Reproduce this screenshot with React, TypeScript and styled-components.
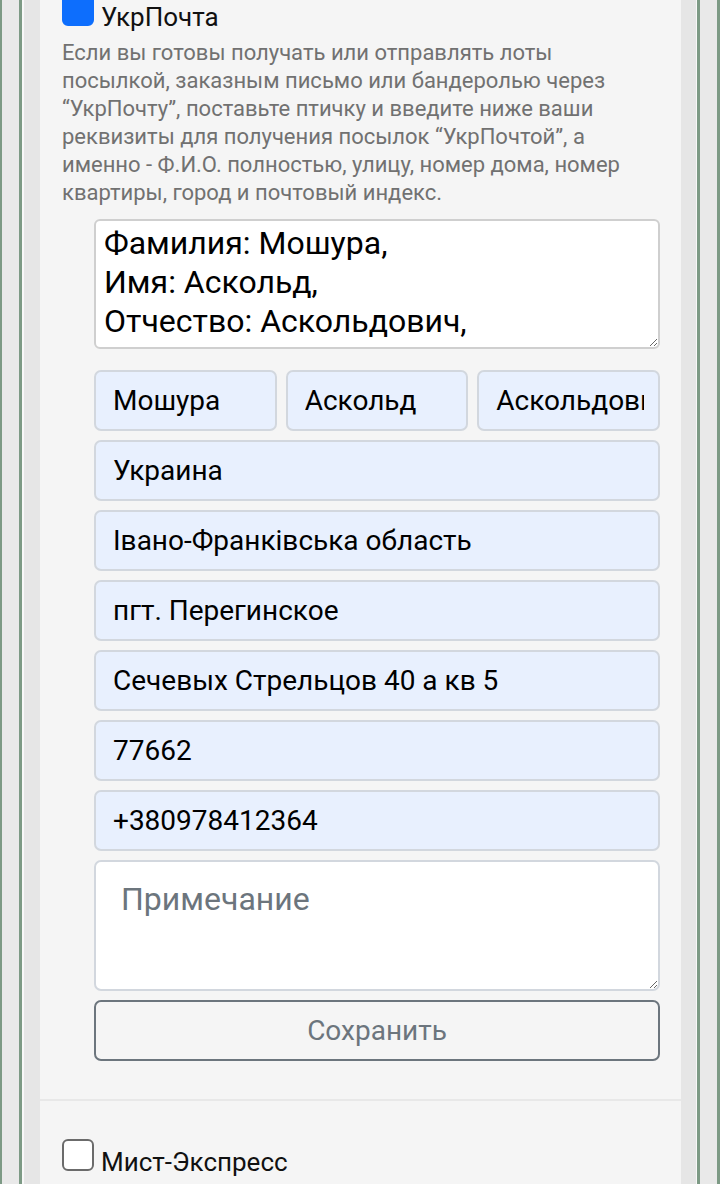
import React from "react";
import styled, { createGlobalStyle } from "styled-components";

const GlobalStyle = createGlobalStyle`
  html, body {
    margin: 0;
    padding: 0;
    background: #e8e8e8;
    font-family: Roboto, "Noto Sans", "Liberation Sans", sans-serif;
  }
  * {
    box-sizing: border-box;
  }
`;

const Frame = styled.div`
  display: flex;
  height: 1184px;
  overflow: hidden;
  padding: 0 17px;
  background: #e9e9e9;
  border-left: 2px solid #7d9a85;
  border-right: 3px solid #7d9a85;
`;

const InnerFrame = styled.div`
  flex: 1;
  display: flex;
  padding-left: 18px;
  padding-right: 16px;
  background: #e6e6e6;
  border-left: 3px solid #7d9a85;
  border-right: 3px solid #7d9a85;
  box-shadow: inset 2px 0 #f8f8f8, inset -1px 0 #f8f8f8;
`;

const Panel = styled.div`
  flex: 1;
  background: #f5f5f5;
`;

const Section = styled.section<{ $offset?: number }>`
  margin-top: ${(p) => (p.$offset ? `-${p.$offset}px` : "0")};
  padding: 0 21px 38px 22px;

  & + & {
    border-top: 2px solid #e8e8e8;
    padding-top: 38px;
  }
`;

const CheckRow = styled.label`
  display: flex;
  align-items: baseline;
  gap: 7px;
  font-size: 26px;
  color: #111;
`;

const Box = styled.span<{ $checked?: boolean }>`
  flex: 0 0 32px;
  width: 32px;
  height: 32px;
  border-radius: 6px;
  background: ${(p) => (p.$checked ? "#0d6efd" : "#fff")};
  border: 2px solid ${(p) => (p.$checked ? "#0d6efd" : "#6b6b6b")};
`;

const Hint = styled.p`
  margin: 7px 0 0;
  font-size: 22px;
  line-height: 28px;
  color: #717171;
`;

const Form = styled.div`
  display: flex;
  flex-direction: column;
  gap: 9px;
  margin: 12px 0 0 32px;
`;

const Summary = styled.textarea`
  height: 130px;
  margin-bottom: 12px;
  padding: 3px 8px;
  border: 2px solid #cfcfcf;
  border-radius: 6px;
  background: #fff;
  color: #000;
  font-family: inherit;
  font-size: 32px;
  line-height: 39px;
  overflow: hidden;
  resize: vertical;
`;

const Row = styled.div`
  display: grid;
  grid-template-columns: repeat(3, 1fr);
  gap: 9px;
`;

const Field = styled.input`
  width: 100%;
  min-width: 0;
  height: 61px;
  padding: 0 14px 0 17px;
  border: 2px solid #d2d7de;
  border-radius: 7px;
  background: #e8f0fe;
  color: #000;
  font-family: inherit;
  font-size: 28px;
`;

const Note = styled.textarea`
  height: 131px;
  padding: 18px 25px;
  border: 2px solid #d2d7de;
  border-radius: 7px;
  background: #fff;
  font-family: inherit;
  font-size: 32px;
  line-height: 39px;
  resize: vertical;

  &::placeholder {
    color: #6c757d;
  }
`;

const SaveButton = styled.button`
  height: 61px;
  border: 2px solid #6c757d;
  border-radius: 7px;
  background: transparent;
  color: #6c757d;
  font-family: inherit;
  font-size: 28px;
`;

const summary = "Фамилия: Мошура,\nИмя: Аскольд,\nОтчество: Аскольдович,";

const fields = [
  "Украина",
  "Івано-Франківська область",
  "пгт. Перегинское",
  "Сечевых Стрельцов 40 а кв 5",
  "77662",
  "+380978412364",
];

const App: React.FC = () => {
  return (
    <>
      <GlobalStyle />
      <Frame>
        <InnerFrame>
          <Panel>
            <Section $offset={6}>
              <CheckRow>
                <Box $checked />
                УкрПочта
              </CheckRow>
              <Hint>
                Если вы готовы получать или отправлять лоты посылкой, заказным
                письмо или бандеролью через “УкрПочту”, поставьте птичку и
                введите ниже ваши реквизиты для получения посылок “УкрПочтой”, а
                именно - Ф.И.О. полностью, улицу, номер дома, номер квартиры,
                город и почтовый индекс.
              </Hint>
              <Form>
                <Summary defaultValue={summary} />
                <Row>
                  <Field defaultValue="Мошура" />
                  <Field defaultValue="Аскольд" />
                  <Field defaultValue="Аскольдович" />
                </Row>
                {fields.map((f) => (
                  <Field key={f} defaultValue={f} />
                ))}
                <Note placeholder="Примечание" />
                <SaveButton>Сохранить</SaveButton>
              </Form>
            </Section>
            <Section>
              <CheckRow>
                <Box />
                Мист-Экспресс
              </CheckRow>
            </Section>
          </Panel>
        </InnerFrame>
      </Frame>
    </>
  );
};

export default App;
